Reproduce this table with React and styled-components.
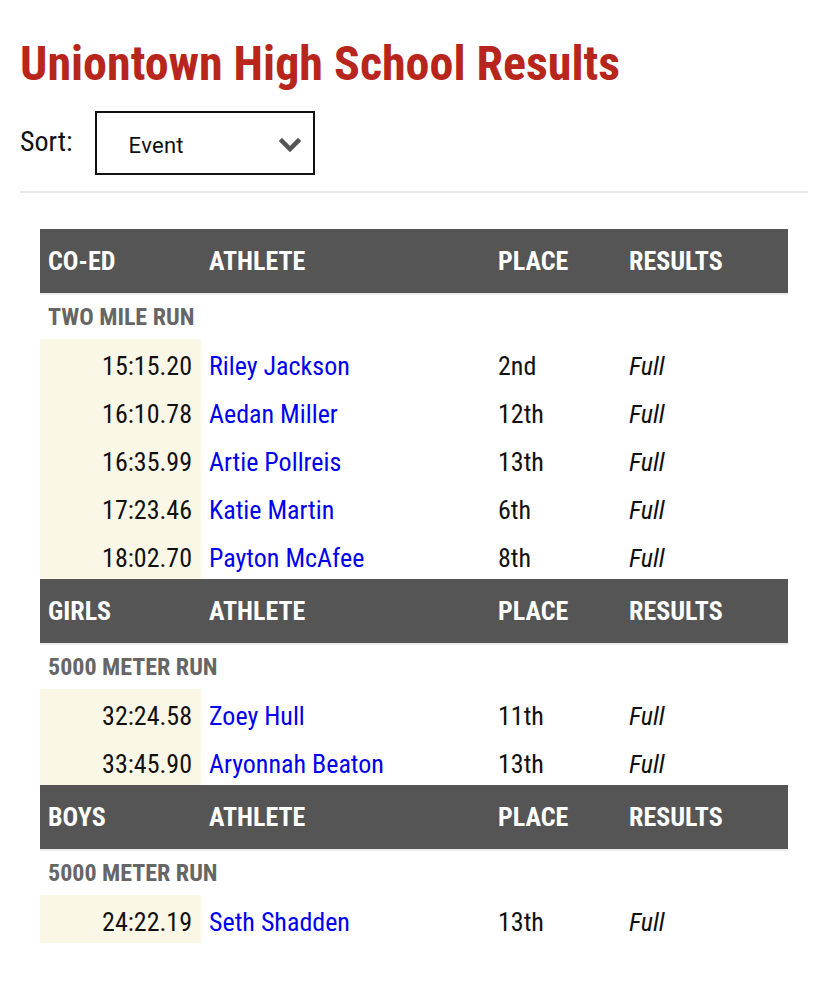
import React from 'react';
import styled, { createGlobalStyle } from 'styled-components';

const GlobalStyle = createGlobalStyle`
  body {
    margin: 0;
    background: #fff;
    font-family: "Roboto Condensed", Roboto, "Liberation Sans Narrow", sans-serif;
    font-stretch: 75%;
    color: #111;
  }
`;

const Page = styled.div`
  padding: 20px 20px 40px;
`;

const Title = styled.h1`
  margin: 0;
  padding-top: 20px;
  font-size: 48px;
  line-height: 48px;
  font-weight: 700;
  color: #b8251c;
`;

const SortRow = styled.div`
  display: flex;
  align-items: center;
  gap: 22px;
  margin-top: 23px;
  font-size: 28px;
`;

const SortLabel = styled.span`
  margin-top: -4px;
`;

const Select = styled.div`
  box-sizing: border-box;
  width: 220px;
  height: 64px;
  border: 2px solid #111;
  display: flex;
  align-items: center;
  justify-content: space-between;
  padding: 4px 12px 0 32px;
  font-family: Roboto, sans-serif;
  font-stretch: 100%;
  font-size: 22px;
  letter-spacing: 0.3px;
`;

const Divider = styled.hr`
  margin: 16px 0 36px;
  border: none;
  border-top: 2px solid #e8e8e8;
`;

const Table = styled.table`
  margin: 0 20px;
  width: calc(100% - 40px);
  border-collapse: collapse;
  table-layout: fixed;
  font-size: 26px;
`;

const HeadCell = styled.th`
  background: #555;
  color: #fff;
  text-align: left;
  font-weight: 700;
  height: 64px;
  padding: 0 8px;
  border-bottom: 2px solid #ececec;
  width: ${(p) => p.$w || 'auto'};
`;

const EventCell = styled.td`
  height: 44px;
  padding: 0 8px;
  font-size: 24px;
  font-weight: 700;
  color: #666;
`;

const TimeCell = styled.td`
  height: 42px;
  padding: 6px 9px 0 8px;
  text-align: right;
  background: #faf7e6;
`;

const Cell = styled.td`
  height: 42px;
  padding: 6px 8px 0;
  font-style: ${(p) => (p.$italic ? 'italic' : 'normal')};
`;

const Link = styled.a`
  color: #0000ee;
  text-decoration: none;
`;

const Chevron = () => (
  <svg width="22" height="16" viewBox="0 0 22 16">
    <path d="M3 4 L11 12 L19 4" fill="none" stroke="#555" strokeWidth="4.5" strokeLinecap="square" strokeLinejoin="miter" />
  </svg>
);

const sections = [
  {
    group: 'CO-ED',
    event: 'TWO MILE RUN',
    rows: [
      ['15:15.20', 'Riley Jackson', '2nd'],
      ['16:10.78', 'Aedan Miller', '12th'],
      ['16:35.99', 'Artie Pollreis', '13th'],
      ['17:23.46', 'Katie Martin', '6th'],
      ['18:02.70', 'Payton McAfee', '8th'],
    ],
  },
  {
    group: 'GIRLS',
    event: '5000 METER RUN',
    rows: [
      ['32:24.58', 'Zoey Hull', '11th'],
      ['33:45.90', 'Aryonnah Beaton', '13th'],
    ],
  },
  {
    group: 'BOYS',
    event: '5000 METER RUN',
    rows: [['24:22.19', 'Seth Shadden', '13th']],
  },
];

const App = () => {
  return (
    <Page>
      <GlobalStyle />
      <Title>Uniontown High School Results</Title>
      <SortRow>
        <SortLabel>Sort:</SortLabel>
        <Select>
          <span>Event</span>
          <Chevron />
        </Select>
      </SortRow>
      <Divider />
      <Table>
        <tbody>
          {sections.map((s, i) => (
            <React.Fragment key={i}>
              <tr>
                <HeadCell $w="145px">{s.group}</HeadCell>
                <HeadCell $w="273px">ATHLETE</HeadCell>
                <HeadCell $w="115px">PLACE</HeadCell>
                <HeadCell>RESULTS</HeadCell>
              </tr>
              <tr>
                <EventCell colSpan={4}>{s.event}</EventCell>
              </tr>
              {s.rows.map((r, j) => (
                <tr key={j}>
                  <TimeCell>{r[0]}</TimeCell>
                  <Cell>
                    <Link href="#">{r[1]}</Link>
                  </Cell>
                  <Cell>{r[2]}</Cell>
                  <Cell $italic>Full</Cell>
                </tr>
              ))}
            </React.Fragment>
          ))}
        </tbody>
      </Table>
    </Page>
  );
};

export default App;
